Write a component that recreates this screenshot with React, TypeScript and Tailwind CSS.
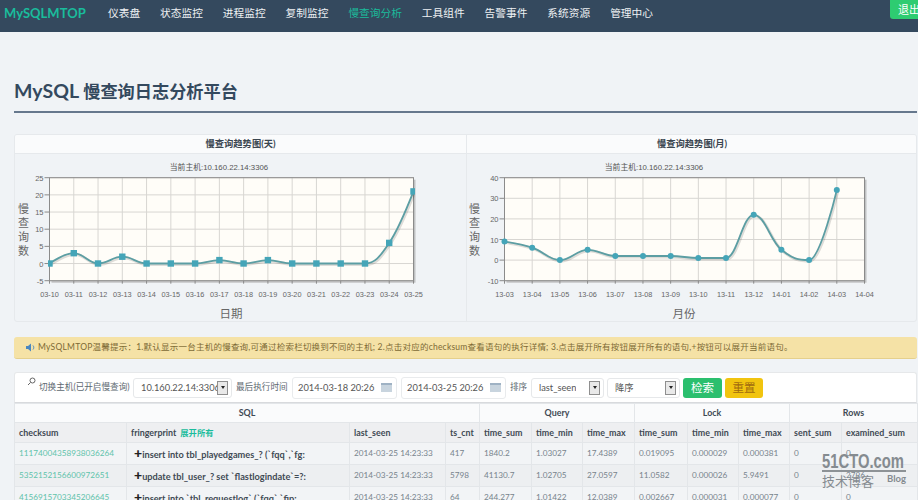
import React from "react";

const CJK = '"Lato","Noto Sans CJK SC",sans-serif';

type ChartProps = {
  left: number; right: number; cats: string[]; data: number[]; yMin: number; yMax: number; step: number;
  shape: "square" | "circle"; subtitleX: number; xTitle: string; xTitleX: number; yTitleX: number; width: number; id: string;
};

function toPath(pts: [number, number][]) {
  const s = 1.5, d = 2.5;
  const anchors = (i: number) => {
    const [x, y] = pts[i];
    const [ax, ay] = pts[i - 1];
    const [bx, by] = pts[i + 1];
    const lx = (s * x + ax) / d, rx = (s * x + bx) / d;
    let ly = (s * y + ay) / d, ry = (s * y + by) / d;
    const corr = ((ry - ly) * (rx - x)) / (rx - lx) + y - ry;
    ly += corr;
    ry += corr;
    if (ly > ay && ly > y) { ly = Math.max(ay, y); ry = 2 * y - ly; }
    else if (ly < ay && ly < y) { ly = Math.min(ay, y); ry = 2 * y - ly; }
    if (ry > by && ry > y) { ry = Math.max(by, y); ly = 2 * y - ry; }
    else if (ry < by && ry < y) { ry = Math.min(by, y); ly = 2 * y - ry; }
    return { lx, ly, rx, ry };
  };
  let p = `M${pts[0][0]} ${pts[0][1]}`;
  for (let i = 1; i < pts.length; i++) {
    const c1 = i > 1 ? anchors(i - 1) : { rx: pts[0][0], ry: pts[0][1] };
    const c2 = i < pts.length - 1 ? anchors(i) : { lx: pts[i][0], ly: pts[i][1] };
    p += ` C${c1.rx.toFixed(1)} ${c1.ry.toFixed(1)} ${c2.lx.toFixed(1)} ${c2.ly.toFixed(1)} ${pts[i][0]} ${pts[i][1]}`;
  }
  return p;
}

function Chart(c: ChartProps) {
  const top = 23.7, bottom = 126.7;
  const x = (i: number) => c.left + (i * (c.right - c.left)) / (c.cats.length - 1);
  const y = (v: number) => top + ((c.yMax - v) * (bottom - top)) / (c.yMax - c.yMin);
  const ticks: number[] = [];
  for (let v = c.yMin; v <= c.yMax; v += c.step) ticks.push(v);
  const pts = c.data.map((v, i) => [Number(x(i).toFixed(1)), Number(y(v).toFixed(1))] as [number, number]);
  const path = toPath(pts);
  const fam = '"Liberation Sans","Noto Sans CJK SC",sans-serif';
  return (
    <svg width={c.width} height={168} className="block" style={{ fontFamily: fam }}>
      <defs>
        <clipPath id={c.id}>
          <rect x={c.left - (c.shape === "square" ? 1.5 : 4)} y={top - 4} width={c.right - c.left + (c.shape === "square" ? 3 : 8)} height={bottom - top + 8} />
        </clipPath>
      </defs>
      <text x={c.subtitleX} y={16} fontSize="7.8" fill="#555" textAnchor="middle">当前主机:10.160.22.14:3306</text>
      <rect x={c.left + 2} y={top + 2} width={c.right - c.left} height={bottom - top} fill="#999" opacity="0.55" />
      <rect x={c.left} y={top} width={c.right - c.left} height={bottom - top} fill="#fffdf8" />
      {ticks.map((v) => (
        <g key={v}>
          <line x1={c.left} x2={c.right} y1={y(v)} y2={y(v)} stroke="#d8d6d2" strokeWidth="1" />
          <line x1={c.left - 5} x2={c.left} y1={y(v)} y2={y(v)} stroke="#8a8a8a" strokeWidth="1" />
          <text x={c.left - 6} y={y(v) + 3} fontSize="7.5" fill="#666" textAnchor="end">{v}</text>
        </g>
      ))}
      {c.cats.map((t, i) => (
        <g key={t}>
          <line x1={x(i)} x2={x(i)} y1={top} y2={bottom} stroke="#d8d6d2" strokeWidth="1" />
          <line x1={x(i)} x2={x(i)} y1={bottom} y2={bottom + 3} stroke="#8a8a8a" strokeWidth="1" />
          <text x={x(i)} y={bottom + 16} fontSize="7.3" fill="#666" textAnchor="middle">{t}</text>
        </g>
      ))}
      <rect x={c.left} y={top} width={c.right - c.left} height={bottom - top} fill="none" stroke="#8b8b8b" strokeWidth="1" />
      <g clipPath={`url(#${c.id})`}>
        <path d={path} fill="none" stroke="#000" strokeOpacity="0.13" strokeWidth="3" transform="translate(1,1)" />
        <path d={path} fill="none" stroke="#5c9ea3" strokeWidth="1.8" />
        {pts.map(([px, py], i) =>
          c.shape === "square" ? (
            <rect key={i} x={px - 3.2} y={py - 3.2} width="6.4" height="6.4" fill="#45a5b8" />
          ) : (
            <circle key={i} cx={px} cy={py} r="3" fill="#45a5b8" />
          )
        )}
      </g>
      <text x={c.xTitleX} y={164} fontSize="11.5" fill="#666" textAnchor="middle">{c.xTitle}</text>
      {["慢", "查", "询", "数"].map((t, i) => (
        <text key={t} x={c.yTitleX} y={59 + i * 14} fontSize="11" fill="#666" textAnchor="middle">{t}</text>
      ))}
    </svg>
  );
}

function Panel({ title, className, children }: { title: string; className: string; children: React.ReactNode }) {
  return (
    <div className={className}>
      <div className="h-[19px] bg-[#fafbfc] border-b border-[#e6e9ec] flex items-center justify-center text-[9.3px] font-bold text-[#3b4650]">{title}</div>
      {children}
    </div>
  );
}

function FakeSelect({ value, className }: { value: string; className: string }) {
  return (
    <div className={`h-[20px] bg-white rounded-[3px] border border-[#e6e8ea] flex items-center pl-[7px] pr-[3px] justify-between text-[#555] text-[9.3px] ${className}`}>
      <span className="whitespace-nowrap overflow-hidden">{value}</span>
      <span className="w-[11px] h-[14px] bg-[#e9e9e9] border border-[#8f8f8f] flex items-center justify-center shrink-0">
        <span className="w-0 h-0 border-l-[2.5px] border-r-[2.5px] border-t-[3px] border-l-transparent border-r-transparent border-t-[#222]" />
      </span>
    </div>
  );
}

function DateInput({ value }: { value: string }) {
  return (
    <div className="w-[105px] h-[22px] bg-white rounded-[3px] border border-[#e9ebed] flex items-center justify-between pl-[5px] pr-[4px] text-[9.3px] text-[#555] whitespace-nowrap">
      <span>{value}</span>
      <svg width="11" height="9" viewBox="0 0 11 9"><rect width="11" height="9" fill="#c8d4de" /><rect y="0" width="11" height="2" fill="#9fb2c4" /></svg>
    </div>
  );
}

const leftCats = ["03-10","03-11","03-12","03-13","03-14","03-15","03-16","03-17","03-18","03-19","03-20","03-21","03-22","03-23","03-24","03-25"];
const rightCats = ["13-03","13-04","13-05","13-06","13-07","13-08","13-09","13-10","13-11","13-12","14-01","14-02","14-03","14-04"];
const navItems = ["仪表盘","状态监控","进程监控","复制监控","慢查询分析","工具组件","告警事件","系统资源","管理中心"];
const widths = [112,223,96,34,52,51,52,53,51,51,52,76];
const subHead = ["checksum","fringerprint","last_seen","ts_cnt","time_sum","time_min","time_max","time_sum","time_min","time_max","sent_sum","examined_sum"];
const rows = [
  ["11174004358938036264","insert into tbl_playedgames_? (`fqq`,`fg:","2014-03-25 14:23:33","417","1840.2","1.03027","17.4389","0.019095","0.000029","0.000381","0","0"],
  ["5352152156600972651","update tbl_user_? set `flastlogindate`=?:","2014-03-25 14:23:33","5798","41130.7","1.02705","27.0597","11.0582","0.000026","5.9491","0","2796"],
  ["4156915703345206645","insert into `tbl_requestlog` (`fqq`,`fip:","2014-03-25 14:23:33","64","244.277","1.01422","12.0389","0.002667","0.000031","0.000077","0","0"],
];

export default function App() {
  return (
    <div className="w-[918px] h-[500px] overflow-hidden relative bg-[#f0f3f6]" style={{ fontFamily: CJK }}>
      <nav className="h-[32px] bg-[#34495e] flex items-center relative">
        <div className="pl-[4px] w-[108px] text-[13px] font-bold text-[#1abc9c] leading-none shrink-0 -mt-[5px]">MySQLMTOP</div>
        <div className="flex gap-[20px] text-[10.7px] text-[#eef1f3] -mt-[5px]">
          {navItems.map((t) => (
            <span key={t} className={t === "慢查询分析" ? "text-[#1abc9c]" : ""}>{t}</span>
          ))}
        </div>
        <div className="absolute right-0 top-0 w-[28px] h-[19px] bg-[#2ecc71] rounded-bl-[3px] overflow-hidden pl-[8px] text-[11px] text-white leading-[19px] whitespace-nowrap">退出</div>
      </nav>

      <div className="pl-[14px] pr-[1px]">
        <h1 className="mt-[47px] h-[32px] text-[17.2px] font-bold text-[#34495e] leading-[24px] whitespace-nowrap"><span className="text-[19.5px]">MySQL </span>慢查询日志分析平台</h1>
        <div className="h-[2px] bg-[#66788d] mb-[21px]" />

        <div className="flex h-[188px] rounded-[3px] border border-[#e6e9ec] overflow-hidden">
          <Panel title="慢查询趋势图(天)" className="w-[452px] border-r border-[#e6e9ec]">
            <Chart id="clipDay" width={451} left={34.5} right={398.5} cats={leftCats} data={[0,3,0,2,0,0,0,1,0,1,0,0,0,0,6,21]} yMin={-5} yMax={25} step={5} shape="square" subtitleX={204} xTitle="日期" xTitleX={216} yTitleX={8.5} />
          </Panel>
          <Panel title="慢查询趋势图(月)" className="flex-1">
            <Chart id="clipMonth" width={450} left={37.5} right={397.5} cats={rightCats} data={[9,6,0,5,2,2,2,1,1,22,5,0,34]} yMin={-10} yMax={40} step={10} shape="circle" subtitleX={187} xTitle="月份" xTitleX={217} yTitleX={7.5} />
          </Panel>
        </div>

        <div className="mt-[15px] h-[22px] rounded-[3px] bg-[#f5e2a6] border-b border-[#e5d08c] flex items-center pl-[11px] text-[8.5px] tracking-[0.23px] text-[#7d6a35] whitespace-nowrap">
          <svg width="12" height="9" viewBox="0 0 12 9" className="mr-[1px] shrink-0"><path d="M1 3h2l3-2.5v8L3 6H1z" fill="#4a87c0" /><path d="M8 2.5c1 1 1 3 0 4" stroke="#4a87c0" fill="none" /></svg>
          <span>MySQLMTOP温馨提示：1.默认显示一台主机的慢查询,可通过检索栏切换到不同的主机; 2.点击对应的checksum查看语句的执行详情; 3.点击展开所有按钮展开所有的语句,+按钮可以展开当前语句。</span>
        </div>

        <div className="mt-[13px] h-[31px] bg-white rounded-t-[3px] border border-[#e6e8ea] border-b-[#d8dadd] flex items-center text-[8.6px] text-[#5d6870] whitespace-nowrap">
          <svg width="9" height="9" viewBox="0 0 9 9" className="ml-[12px] -mt-[13px] shrink-0"><circle cx="5.5" cy="3.5" r="2.5" fill="none" stroke="#666" /><line x1="3.5" y1="5.5" x2="1" y2="8" stroke="#666" /></svg>
          <span className="ml-[3px] w-[94px]">切换主机(已开启慢查询)</span>
          <FakeSelect value="10.160.22.14:3306" className="w-[99px]" />
          <span className="ml-[4px] w-[56px]">最后执行时间</span>
          <DateInput value="2014-03-18 20:26" />
          <span className="w-[4px]" />
          <DateInput value="2014-03-25 20:26" />
          <span className="ml-[4px] w-[21px]">排序</span>
          <FakeSelect value="last_seen" className="w-[73px]" />
          <span className="w-[3px]" />
          <FakeSelect value="降序" className="w-[73px]" />
          <button className="ml-[3px] w-[39px] h-[20px] rounded-[3px] bg-[#2bbf6e] text-white text-[11.5px] leading-none">检索</button>
          <button className="ml-[3px] w-[38px] h-[20px] rounded-[3px] bg-[#f1c40f] text-[#a06a10] text-[11.5px] leading-none">重置</button>
        </div>

        <table className="table-fixed border-collapse w-[903px] text-[8.2px]">
          <colgroup>{widths.map((w, i) => <col key={i} style={{ width: w }} />)}</colgroup>
          <thead>
            <tr className="h-[19px] bg-[#fafbfc] text-[#3f4a54] text-center font-bold text-[8.9px]">
              <th colSpan={4} className="border border-[#e3e6e9]">SQL</th>
              <th colSpan={3} className="border border-[#e3e6e9]">Query</th>
              <th colSpan={3} className="border border-[#e3e6e9]">Lock</th>
              <th colSpan={2} className="border border-[#e3e6e9]">Rows</th>
            </tr>
            <tr className="h-[20px] bg-[#eeeff1] text-[#3f4a54] text-left text-[8.9px]">
              {subHead.map((t, i) => (
                <th key={i} className="border border-[#e3e6e9] pl-[4px] font-bold whitespace-nowrap overflow-hidden">
                  {t}{i === 1 && <span className="text-[#1abc9c] ml-[2px] text-[8.3px]"> 展开所有</span>}
                </th>
              ))}
            </tr>
          </thead>
          <tbody>
            {rows.map((r, ri) => (
              <tr key={ri} className={`h-[22px] ${ri === 1 ? "bg-[#edeff1]" : "bg-[#f2f4f6]"}`}>
                {r.map((v, i) => (
                  <td key={i} className={`border border-[#e3e6e9] whitespace-nowrap overflow-hidden ${i === 0 ? "pl-[4px] text-[#5fc3ab]" : i === 1 ? "font-bold text-[#3f4a54] pl-[7px] text-[9.2px]" : "pl-[4px] text-[#77838c]"}`}>
                    {i === 1 && <span className="text-[14px] leading-none font-black text-[#222]">+</span>}
                    {v}
                  </td>
                ))}
              </tr>
            ))}
          </tbody>
        </table>
      </div>

      <div className="absolute left-[822px] top-[453px] w-[84px] text-[#858b90] leading-none">
        <div className="h-[19px] border-b-2 border-[#8d9296] overflow-visible">
          <div className="text-[20px] font-bold leading-[17px] origin-left scale-x-[0.74] whitespace-nowrap" style={{ fontFamily: '"Liberation Sans",sans-serif' }}>51CTO.com</div>
        </div>
        <div className="flex justify-between items-center mt-[2px]">
          <span className="text-[13px]" style={{ fontFamily: '"Noto Sans CJK SC",sans-serif' }}>技术博客</span>
          <span className="text-[9.5px] font-bold -mt-[3px]">Blog</span>
        </div>
      </div>
    </div>
  );
}
